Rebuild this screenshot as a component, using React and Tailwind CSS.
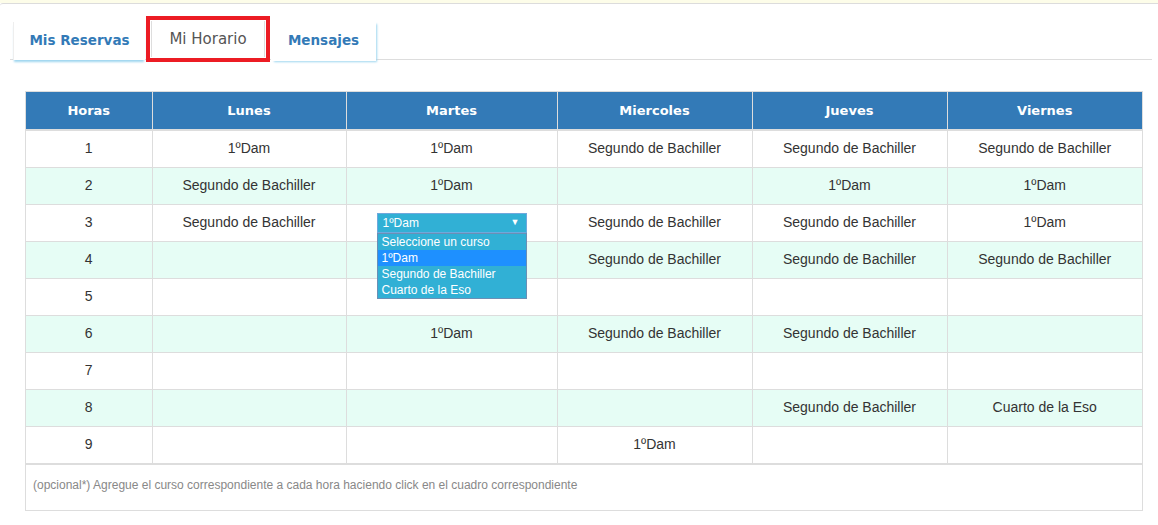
import React from 'react';

const dias = ['Lunes', 'Martes', 'Miercoles', 'Jueves', 'Viernes'];

const horario = [
  ['1ºDam', '1ºDam', 'Segundo de Bachiller', 'Segundo de Bachiller', 'Segundo de Bachiller'],
  ['Segundo de Bachiller', '1ºDam', '', '1ºDam', '1ºDam'],
  ['Segundo de Bachiller', 'SELECT', 'Segundo de Bachiller', 'Segundo de Bachiller', '1ºDam'],
  ['', '', 'Segundo de Bachiller', 'Segundo de Bachiller', 'Segundo de Bachiller'],
  ['', '', '', '', ''],
  ['', '1ºDam', 'Segundo de Bachiller', 'Segundo de Bachiller', ''],
  ['', '', '', '', ''],
  ['', '', '', 'Segundo de Bachiller', 'Cuarto de la Eso'],
  ['', '', '1ºDam', '', ''],
];

const opciones = ['Seleccione un curso', '1ºDam', 'Segundo de Bachiller', 'Cuarto de la Eso'];

function CursoSelect() {
  return (
    <div className="relative mx-auto w-[150px] text-left">
      <div className="flex h-[20px] items-center justify-between bg-[#31b0d5] pl-[5px] pr-[6px] text-[12px] text-white border border-[#6fa8dc]">
        <span>1ºDam</span>
        <span className="text-[9px]">▼</span>
      </div>
      {/* lista desplegada */}
      <ul className="absolute left-0 top-[20px] z-10 w-[150px] border border-[#6b8fb5] bg-[#31b0d5] text-[12px] leading-[16px] text-white">
        {opciones.map((o) => (
          <li key={o} className={`pl-[4px] ${o === '1ºDam' ? 'bg-[#1e90ff]' : ''}`}>
            {o}
          </li>
        ))}
      </ul>
    </div>
  );
}

function App() {
  return (
    <div className="min-h-screen bg-white font-['Liberation_Sans',Arial,sans-serif] text-[#333]">
      <div className="h-[3px] bg-[#fdfde9]"></div>
      <div className="border-t border-[#dcdcdc] rounded-tl-[3px]">
        {/* Tabs */}
        <div className="flex items-end h-[56px] ml-[10px] mr-[6px] border-b border-[#dddddd] font-['DejaVu_Sans',Verdana,sans-serif] text-[14px]">
          <div className="ml-[3px] w-[132px] h-[38px] pb-[2px] flex items-center justify-center bg-white border-l border-[#eeeeee] shadow-[0_3px_2px_-1px_#9fd6ef] font-bold text-[13.5px] text-[#337ab7] translate-y-[1px]">
            Mis Reservas
          </div>
          <div className="ml-[1px] border-4 border-[#ec1c24] p-px translate-y-[3px]">
            <div className="w-[114px] h-[36px] flex items-center justify-center bg-white border-x border-[#dddddd] text-[15px] text-[#555]">
              Mi Horario
            </div>
          </div>
          <div className="ml-[1px] w-[105px] h-[40px] pb-[2px] flex items-center justify-center bg-white shadow-[2px_2px_2px_-1px_#9fd6ef] font-bold text-[13.5px] text-[#337ab7] translate-y-[2px]">
            Mensajes
          </div>
        </div>

        {/* Tabla horario */}
        <div className="pt-[31px] pl-[25px] pr-[15px]">
          <div className="w-[1118px] border border-[#dddddd]">
            <table className="w-full table-fixed border-collapse text-[14px]">
              <colgroup>
                <col className="w-[126px]" />
                <col className="w-[194px]" />
                <col className="w-[211px]" />
                <col className="w-[195px]" />
                <col className="w-[195px]" />
                <col />
              </colgroup>
              <thead>
                <tr className="h-[38px] bg-[#337ab7] text-white font-['DejaVu_Sans',Verdana,sans-serif] text-[13px] font-bold border-b-2 border-[#dddddd]">
                  <th className="border-r border-[#dddddd]">Horas</th>
                  {dias.map((d) => (
                    <th key={d} className="border-l border-[#dddddd]">{d}</th>
                  ))}
                </tr>
              </thead>
              <tbody>
                {horario.map((fila, i) => (
                  <tr key={i} className={`h-[37px] border-t border-[#dddddd] ${i % 2 === 1 ? 'bg-[#e6fdf5]' : 'bg-white'}`}>
                    <td className="text-center border-r border-[#dddddd]">{i + 1}</td>
                    {fila.map((c, j) => (
                      <td key={j} className="text-center border-l border-[#dddddd]">
                        {c === 'SELECT' ? <CursoSelect /> : c}
                      </td>
                    ))}
                  </tr>
                ))}
              </tbody>
            </table>
            <div className="h-[47px] border-t-2 border-[#dddddd] pl-[7px] pt-[11px] text-[12px] text-[#888]">
              (opcional*) Agregue el curso correspondiente a cada hora haciendo click en el cuadro correspondiente
            </div>
          </div>
        </div>
      </div>
    </div>
  );
}

export default App;
